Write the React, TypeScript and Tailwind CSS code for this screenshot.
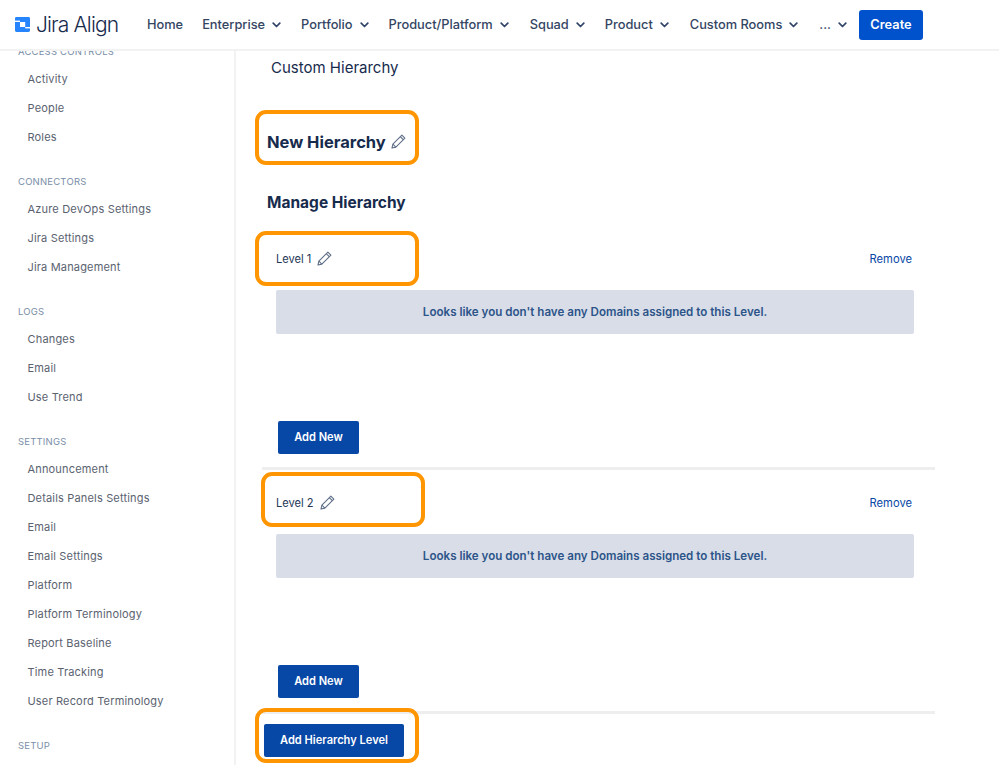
import React from "react";

const font = { fontFamily: "Inter, 'Liberation Sans', sans-serif" };

const groups: { title: string; items: string[]; cls: string }[] = [
  { title: "ACCESS CONTROLS", items: ["Activity", "People", "Roles"], cls: "-mt-[6px]" },
  { title: "CONNECTORS", items: ["Azure DevOps Settings", "Jira Settings", "Jira Management"], cls: "mt-[23px]" },
  { title: "LOGS", items: ["Changes", "Email", "Use Trend"], cls: "mt-[23px]" },
  {
    title: "SETTINGS",
    items: [
      "Announcement",
      "Details Panels Settings",
      "Email",
      "Email Settings",
      "Platform",
      "Platform Terminology",
      "Report Baseline",
      "Time Tracking",
      "User Record Terminology",
    ],
    cls: "mt-[23px]",
  },
  { title: "SETUP", items: [], cls: "mt-[23px]" },
];

function Chevron() {
  return (
    <svg width="9" height="6" viewBox="0 0 9 6" fill="none" className="ml-[7px] mt-[1px]">
      <path d="M1.2 1.2 L4.5 4.5 L7.8 1.2" stroke="#2f4468" strokeWidth="1.7" strokeLinecap="round" strokeLinejoin="round" />
    </svg>
  );
}

function Pencil({ size = 15 }: { size?: number }) {
  return (
    <svg width={size} height={size} viewBox="0 0 16 16" fill="none" stroke="#5f6f88" strokeWidth="1.15" strokeLinejoin="round" className="-mt-[2px]">
      <path d="M11.6 1.2 L14.8 4.4 L5.2 14 L1 15 L2 10.8 Z" />
      <path d="M9.9 2.9 L13.1 6.1" />
      <path d="M2 10.8 L5.2 14" />
    </svg>
  );
}

function Logo() {
  return (
    <svg width="15" height="15" viewBox="0 0 15 15" className="shrink-0">
      <rect width="15" height="15" rx="1.4" fill="#2684ff" />
      <rect x="5" y="5" width="5.2" height="5" fill="#fff" />
      <rect x="0" y="3.6" width="5" height="1.4" fill="#fff" />
      <rect x="10.2" y="10" width="4.8" height="1.4" fill="#fff" />
    </svg>
  );
}

function NavItem({ label, chevron = true, cls = "" }: { label: string; chevron?: boolean; cls?: string }) {
  return (
    <div className={`flex items-center text-[12.8px] font-medium text-[#344563] ${cls}`}>
      <span>{label}</span>
      {chevron && <Chevron />}
    </div>
  );
}

function Level({ name, first }: { name: string; first?: boolean }) {
  return (
    <section className={first ? "mt-[36px]" : "mt-[25px]"}>
      <div className="flex w-[650px] items-center justify-between pl-[14px]">
        <div className="flex items-center gap-[6px] text-[11.1px] text-[#253858]">
          <span>{name}</span>
          <Pencil />
        </div>
        <span className="text-[11.2px] text-[#0747a6]">Remove</span>
      </div>
      <div className="ml-[14px] mt-[22px] flex h-[44px] w-[638px] items-center justify-center rounded-[2px] bg-[#d8dde8] pt-[2px] text-[11.6px] font-semibold text-[#2c5488]">
        Looks like you don't have any Domains assigned to this Level.
      </div>
      <button className="ml-[16px] mt-[87px] flex h-[33px] w-[81px] items-center justify-center rounded-[2px] bg-[#0747a6] pt-[1px] text-[11.1px] font-semibold text-white">
        Add New
      </button>
      <div className="mt-[13px] h-[3px] w-[673px] bg-[#eeeeee]" />
    </section>
  );
}

function Highlight({ cls }: { cls: string }) {
  return <div className={`pointer-events-none absolute h-[55px] w-[164px] rounded-[11px] border-[4px] border-[#ff9500] ${cls}`} />;
}

export default function App() {
  return (
    <div className="relative flex h-[765px] w-[999px] flex-col overflow-hidden bg-white" style={font}>
      <header className="z-10 flex h-[51px] shrink-0 items-center border-b-2 border-[#f2f2f2] bg-white pl-[15px]">
        <Logo />
        <span className="ml-[6px] w-[111px] text-[21px] font-light tracking-[-0.85px] text-[#172b4d]">Jira Align</span>
        <NavItem label="Home" chevron={false} />
        <NavItem label="Enterprise" cls="ml-[19px]" />
        <NavItem label="Portfolio" cls="ml-[20px]" />
        <NavItem label="Product/Platform" cls="ml-[20px]" />
        <NavItem label="Squad" cls="ml-[21px]" />
        <NavItem label="Product" cls="ml-[20px]" />
        <NavItem label="Custom Rooms" cls="ml-[21px]" />
        <NavItem label="..." cls="ml-[21px]" />
        <button className="ml-[12px] flex h-[30px] w-[64px] items-center justify-center rounded-[3px] bg-[#0052cc] text-[12.8px] font-semibold text-white">
          Create
        </button>
      </header>

      <div className="flex min-h-0 flex-1">
        <aside className="w-[236px] shrink-0 overflow-hidden border-r-2 border-[#f2f2f2] pl-[18px]">
          {groups.map((g) => (
            <div key={g.title} className={g.cls}>
              <div className="h-[14px] text-[9.5px] leading-[14px] tracking-[0.2px] text-[#7a8ea8]">{g.title}</div>
              <div className="mt-[6px]">
                {g.items.map((i) => (
                  <div key={i} className="flex h-[29px] items-center pl-[9.5px] text-[11px] tracking-[0.17px] text-[#5a6270]">
                    {i}
                  </div>
                ))}
              </div>
            </div>
          ))}
        </aside>

        <main className="min-w-0 flex-1 pl-[26px]">
          <h1 className="ml-[9px] mt-[5px] text-[15px] leading-[24px] text-[#172b4d]">Custom Hierarchy</h1>
          <div className="ml-[5px] mt-[50px] flex h-[24px] items-center gap-[5px]">
            <h2 className="text-[16.5px] font-bold text-[#172b4d]">New Hierarchy</h2>
            <Pencil />
          </div>
          <h3 className="ml-[5px] mt-[37px] text-[15.5px] font-bold leading-[24px] text-[#172b4d]">Manage Hierarchy</h3>
          <Level name="Level 1" first />
          <Level name="Level 2" />
          <button className="ml-[2px] mt-[10px] flex h-[33px] w-[140px] items-center justify-center rounded-[2px] bg-[#0747a6] pt-[1px] text-[11.1px] font-semibold text-white">
            Add Hierarchy Level
          </button>
        </main>
      </div>

      <Highlight cls="left-[255px] top-[110px]" />
      <Highlight cls="left-[255px] top-[231px]" />
      <Highlight cls="left-[261px] top-[472px]" />
      <Highlight cls="left-[255px] top-[708px]" />
    </div>
  );
}
